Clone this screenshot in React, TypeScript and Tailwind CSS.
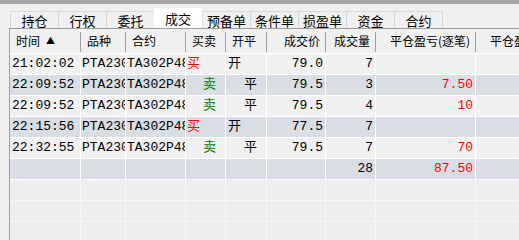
import React from 'react';

const TABS = ['持仓', '行权', '委托', '成交', '预备单', '条件单', '损盈单', '资金', '合约'];

type Col = { title: string; w: number; align: 'left' | 'right' };
const COLS: Col[] = [
  { title: '时间', w: 71, align: 'left' },
  { title: '品种', w: 45, align: 'left' },
  { title: '合约', w: 60, align: 'left' },
  { title: '买卖', w: 40, align: 'left' },
  { title: '开平', w: 41, align: 'left' },
  { title: '成交价', w: 59, align: 'right' },
  { title: '成交量', w: 50, align: 'right' },
  { title: '平仓盈亏(逐笔)', w: 100, align: 'right' },
  { title: '平仓盈亏(逐笔)', w: 100, align: 'right' },
];

type Trade = { time: string; side: '买' | '卖'; oc: '开' | '平'; price: string; qty: string; pnl: string };
const TRADES: Trade[] = [
  { time: '21:02:02', side: '买', oc: '开', price: '79.0', qty: '7', pnl: '' },
  { time: '22:09:52', side: '卖', oc: '平', price: '79.5', qty: '3', pnl: '7.50' },
  { time: '22:09:52', side: '卖', oc: '平', price: '79.5', qty: '4', pnl: '10' },
  { time: '22:15:56', side: '买', oc: '开', price: '77.5', qty: '7', pnl: '' },
  { time: '22:32:55', side: '卖', oc: '平', price: '79.5', qty: '7', pnl: '70' },
];

const mono = "font-['Liberation_Mono','Noto_Sans_CJK_SC',monospace] text-[13px]";

function Cell({ w, className, children }: { w: number; className?: string; children?: React.ReactNode }) {
  return (
    <div
      className={`h-full shrink-0 overflow-hidden whitespace-nowrap border-r border-white flex items-center ${className || ''}`}
      style={{ width: w }}
    >
      {children}
    </div>
  );
}

function Row({ shaded, children }: { shaded?: boolean; children?: React.ReactNode }) {
  return (
    <div className={`flex h-[21px] border-b border-white ${shaded ? 'bg-[#d9dee5]' : 'bg-[#f0f0f0]'}`}>
      {children}
    </div>
  );
}

export default function App() {
  return (
    <div className="w-[519px] h-[240px] overflow-hidden bg-[#f0f0f0] font-['Noto_Sans_CJK_SC','Liberation_Sans',sans-serif] text-black">
      <div className="h-[4px] bg-[#a5a5a5]" />
      <div className="flex items-end h-[20px] mt-[4px] pl-[10px]">
        {TABS.map((t) => (
          <div
            key={t}
            className={
              t === '成交'
                ? 'w-[48px] h-[20px] bg-white flex items-center justify-center text-[13px] leading-none'
                : 'w-[48px] h-[17px] bg-[#f0f0f0] border-l border-t border-[#d9d9d9] flex items-center justify-center text-[13px] leading-none'
            }
          >
            {t}
          </div>
        ))}
        <div className="w-px h-[17px] bg-[#d9d9d9]" />
      </div>
      <div className="ml-[9px] border-l border-t border-[#a0a0a0] overflow-hidden h-[212px]">
        <div className="flex h-[25px] w-[700px] border-b border-white">
          {COLS.map((c, i) => (
            <div
              key={i}
              className={`shrink-0 h-full flex items-center whitespace-nowrap text-[12px] relative ${c.align === 'right' ? 'justify-end pr-[6px]' : 'pl-[6px]'}`}
              style={{ width: c.w }}
            >
              <span>{c.title}</span>
              {i === 0 && <span className="ml-[6px] text-[9px]">▲</span>}
              <div className="absolute right-0 top-[3px] h-[20px] w-px bg-[#a0a0a0]" />
            </div>
          ))}
        </div>
        <div className={`w-[700px] ${mono}`}>
          {TRADES.map((r, i) => (
            <Row key={i} shaded={i % 2 === 1}>
              <Cell w={71} className="pl-[2px]">{r.time}</Cell>
              <Cell w={45} className="pl-[1px]">PTA2305</Cell>
              <Cell w={60} className="pl-[1px]">TA302P4800</Cell>
              <Cell w={40} className={r.side === '买' ? 'pl-[1px] text-[#ff0000]' : 'pl-[17px] text-[#008000]'}>{r.side}</Cell>
              <Cell w={41} className={r.oc === '开' ? 'pl-[2px]' : 'pl-[18px]'}>{r.oc}</Cell>
              <Cell w={59} className="justify-end pr-[2px]">{r.price}</Cell>
              <Cell w={50} className="justify-end pr-[2px]">{r.qty}</Cell>
              <Cell w={100} className="justify-end pr-[2px] text-[#ff0000]">{r.pnl}</Cell>
              <Cell w={100} />
            </Row>
          ))}
          <Row shaded>
            <Cell w={71} />
            <Cell w={45} />
            <Cell w={60} />
            <Cell w={40} />
            <Cell w={41} />
            <Cell w={59} />
            <Cell w={50} className="justify-end pr-[2px]">28</Cell>
            <Cell w={100} className="justify-end pr-[2px] text-[#ff0000]">87.50</Cell>
            <Cell w={100} />
          </Row>
          {[0, 1, 2].map((k) => (
            <div key={k} className="flex h-[21px] border-b border-[#f6f6f6] bg-[#eeeeee]">
              {[71, 45, 60, 40, 41, 59, 50, 100, 100].map((w, j) => (
                <div key={j} className="h-full shrink-0 border-r border-[#f6f6f6]" style={{ width: w }} />
              ))}
            </div>
          ))}
        </div>
      </div>
    </div>
  );
}
